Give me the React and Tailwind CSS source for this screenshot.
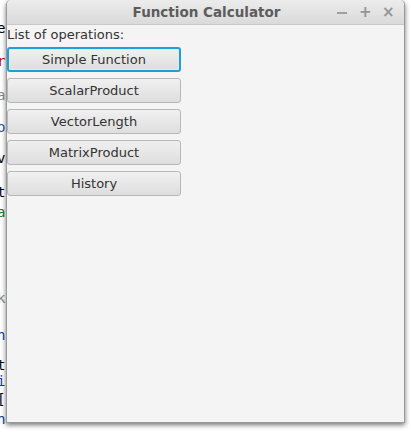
const EDGE_GLYPHS = [
    { h: 'h-[20px]', ch: '', cls: '' },
    { h: 'h-[16px]', ch: 'e', cls: 'text-black' },
    { h: 'h-[33px]', ch: 'r', cls: 'text-[#c00000] pt-[17px]' },
    { h: 'h-[34px]', ch: 'a', cls: 'text-[#8a8a8a] pt-[18px]' },
    { h: 'h-[32px]', ch: 'o', cls: 'text-[#2060a0] pt-[16px]' },
    { h: 'h-[31px]', ch: 'v', cls: 'text-black pt-[15px]' },
    { h: 'h-[34px]', ch: 't', cls: 'text-black pt-[18px]' },
    { h: 'h-[21px]', ch: 'a', cls: 'text-[#207a20] pt-[4px]' },
    { h: 'h-[85px]', ch: 'k', cls: 'text-[#8a8a8a] pt-[69px]' },
    { h: 'h-[37px]', ch: 'n', cls: 'text-[#1a3aa8] pt-[21px]' },
    { h: 'h-[30px]', ch: 't', cls: 'text-black pt-[14px]' },
    { h: 'h-[16px]', ch: 'i', cls: 'text-[#1a3aa8]' },
    { h: 'h-[18px]', ch: '[', cls: 'text-black pt-[2px]' },
    { h: 'h-[20px]', ch: 'n', cls: 'text-[#1a3aa8] pt-[4px]' },
];

const OPERATIONS = ['Simple Function', 'ScalarProduct', 'VectorLength', 'MatrixProduct', 'History'];

function TitleBar() {
    return (
        <div className="relative h-[25px] flex items-center justify-center rounded-t-[5px] bg-gradient-to-b from-[#ececec] to-[#dadada] border-b border-[#c9c9c9]">
            <span className="text-[13.5px] font-bold text-[#5c5c5c] pl-[2px]">Function Calculator</span>
            <div className="absolute right-[11px] top-0 h-full flex items-center gap-[12px] text-[#959595] font-bold">
                <span className="w-[10px] h-[2px] bg-[#a0a0a0] mt-[2px]" />
                <span className="w-[11px] text-center text-[15px] leading-none">+</span>
                <span className="w-[11px] text-center text-[15px] leading-none">×</span>
            </div>
        </div>
    );
}

export default function App() {
    return (
        <div className="w-[411px] h-[432px] bg-white overflow-hidden flex font-['DejaVu_Sans',sans-serif]">
            <div className="w-[6px] flex-shrink-0 flex flex-col overflow-hidden text-[14px] leading-[16px] font-['DejaVu_Sans_Mono',monospace]">
                {EDGE_GLYPHS.map((g, i) => (
                    <div key={i} className={`${g.h} ${g.cls} -ml-[3px] flex-shrink-0 overflow-hidden`}>{g.ch}</div>
                ))}
            </div>
            <div className="flex flex-col">
                <div className="w-[399px] h-[423px] flex flex-col bg-[#f4f4f4] border-x border-b border-[#9a9a9a] rounded-t-[5px] shadow-[0px_2px_5px_rgba(0,0,0,0.55)]">
                    <TitleBar />
                    <div className="flex flex-col pt-[1px]">
                        <p className="text-[13px] leading-[18px] text-[#333]">List of operations:</p>
                        <div className="flex flex-col gap-[6px] mt-[3px]">
                            {OPERATIONS.map((op, i) => (
                                <button
                                    key={op}
                                    className={`w-[174px] h-[25px] rounded-[3px] text-[13px] text-[#333] bg-gradient-to-b from-[#f0f0f0] to-[#dedede] ${
                                        i === 0
                                            ? 'border-2 border-[#1ba1d8] shadow-[inset_0_0_0_1px_#e8e8e8]'
                                            : 'border border-[#b8b8b8]'
                                    }`}
                                >
                                    {op}
                                </button>
                            ))}
                        </div>
                    </div>
                </div>
            </div>
        </div>
    );
}
